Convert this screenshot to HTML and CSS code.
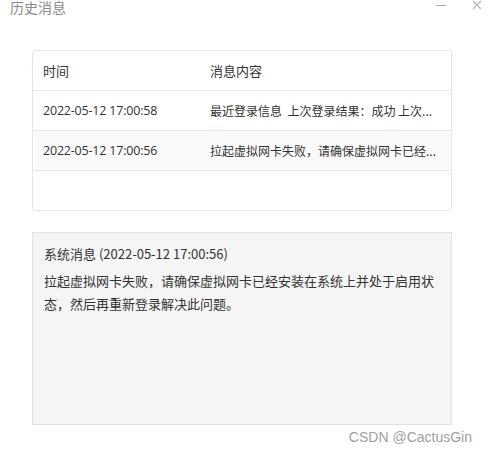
FILE: index.html
```html
<!DOCTYPE html>
<html lang="zh-CN">

<head>
	<meta charset="UTF-8">
	<title>历史消息</title>
	<link rel="stylesheet" href="styles.css">
</head>

<body>

	<header class="titleBar">
		<h1>历史消息</h1>
		<div class="winButtons">
			<span class="winMin"></span>
			<svg class="winClose" width="10" height="10" viewBox="0 0 10 10">
				<path d="M1 1 L9 9 M9 1 L1 9" stroke="#b5b5b5" stroke-width="1.1" fill="none" />
			</svg>
		</div>
	</header>

	<div class="container">
		<section class="msgTable">
			<div class="row head">
				<div class="cell">时间</div>
				<div class="cell">消息内容</div>
			</div>
			<div class="row">
				<div class="cell num">2022-05-12 17:00:58</div>
				<div class="cell text">最近登录信息&nbsp;&nbsp;上次登录结果：成功 上次...</div>
			</div>
			<div class="row striped">
				<div class="cell num">2022-05-12 17:00:56</div>
				<div class="cell text">拉起虚拟网卡失败，请确保虚拟网卡已经...</div>
			</div>
		</section>

		<section class="msgDetail">
			<h2>系统消息 (2022-05-12 17:00:56)</h2>
			<p>拉起虚拟网卡失败，请确保虚拟网卡已经安装在系统上并处于启用状态，然后再重新登录解决此问题。</p>
		</section>
	</div>

	<footer>CSDN @CactusGin</footer>

</body>

</html>
```

FILE: styles.css
```css
* {
	margin: 0;
	padding: 0;
	box-sizing: border-box;
}

body {
	font-family: "Noto Sans CJK SC", "Noto Sans", sans-serif;
	background-color: #fff;
	color: #333;
	width: 488px;
	height: 453px;
	overflow: hidden;
}

.titleBar {
	display: flex;
	justify-content: space-between;
	align-items: flex-start;
	height: 14px;
	padding: 0 6px 0 10px;
}

.titleBar h1 {
	font-size: 14px;
	font-weight: normal;
	line-height: 15px;
	color: #8a8a8a;
}

.winButtons {
	display: flex;
	align-items: center;
	gap: 26px;
	height: 9px;
}

.winMin {
	display: block;
	width: 10px;
	height: 1px;
	background-color: #aaa;
	margin-top: 1px;
}

.container {
	padding: 36px 36px 0 32px;
}

.msgTable {
	height: 161px;
	border: 1px solid #e6e6e6;
	border-radius: 3px;
	overflow: hidden;
}

.row {
	display: grid;
	grid-template-columns: 167px 1fr;
	height: 40px;
	align-items: center;
	border-bottom: 1px solid #e8e8e8;
	font-size: 13px;
}

.row.striped {
	background-color: #fafafa;
}

.cell {
	padding-left: 10px;
	white-space: nowrap;
}

.cell.num {
	font-family: "Open Sans", "Noto Sans", sans-serif;
	font-size: 12.5px;
	letter-spacing: -0.2px;
}

.cell.text {
	font-size: 12px;
}

.msgDetail {
	margin-top: 21px;
	height: 193px;
	border: 1px solid #e2e2e2;
	background-color: #f5f5f5;
	padding: 9px 12px 0 11px;
	font-size: 13px;
	line-height: 23px;
}

.msgDetail h2 {
	font-size: 13px;
	font-weight: normal;
	margin-bottom: 4px;
}

footer {
	text-align: right;
	padding: 4px 16px 0 0;
	font-family: "Liberation Sans", Arial, sans-serif;
	font-size: 14px;
	color: #a0a0a0;
}
```
